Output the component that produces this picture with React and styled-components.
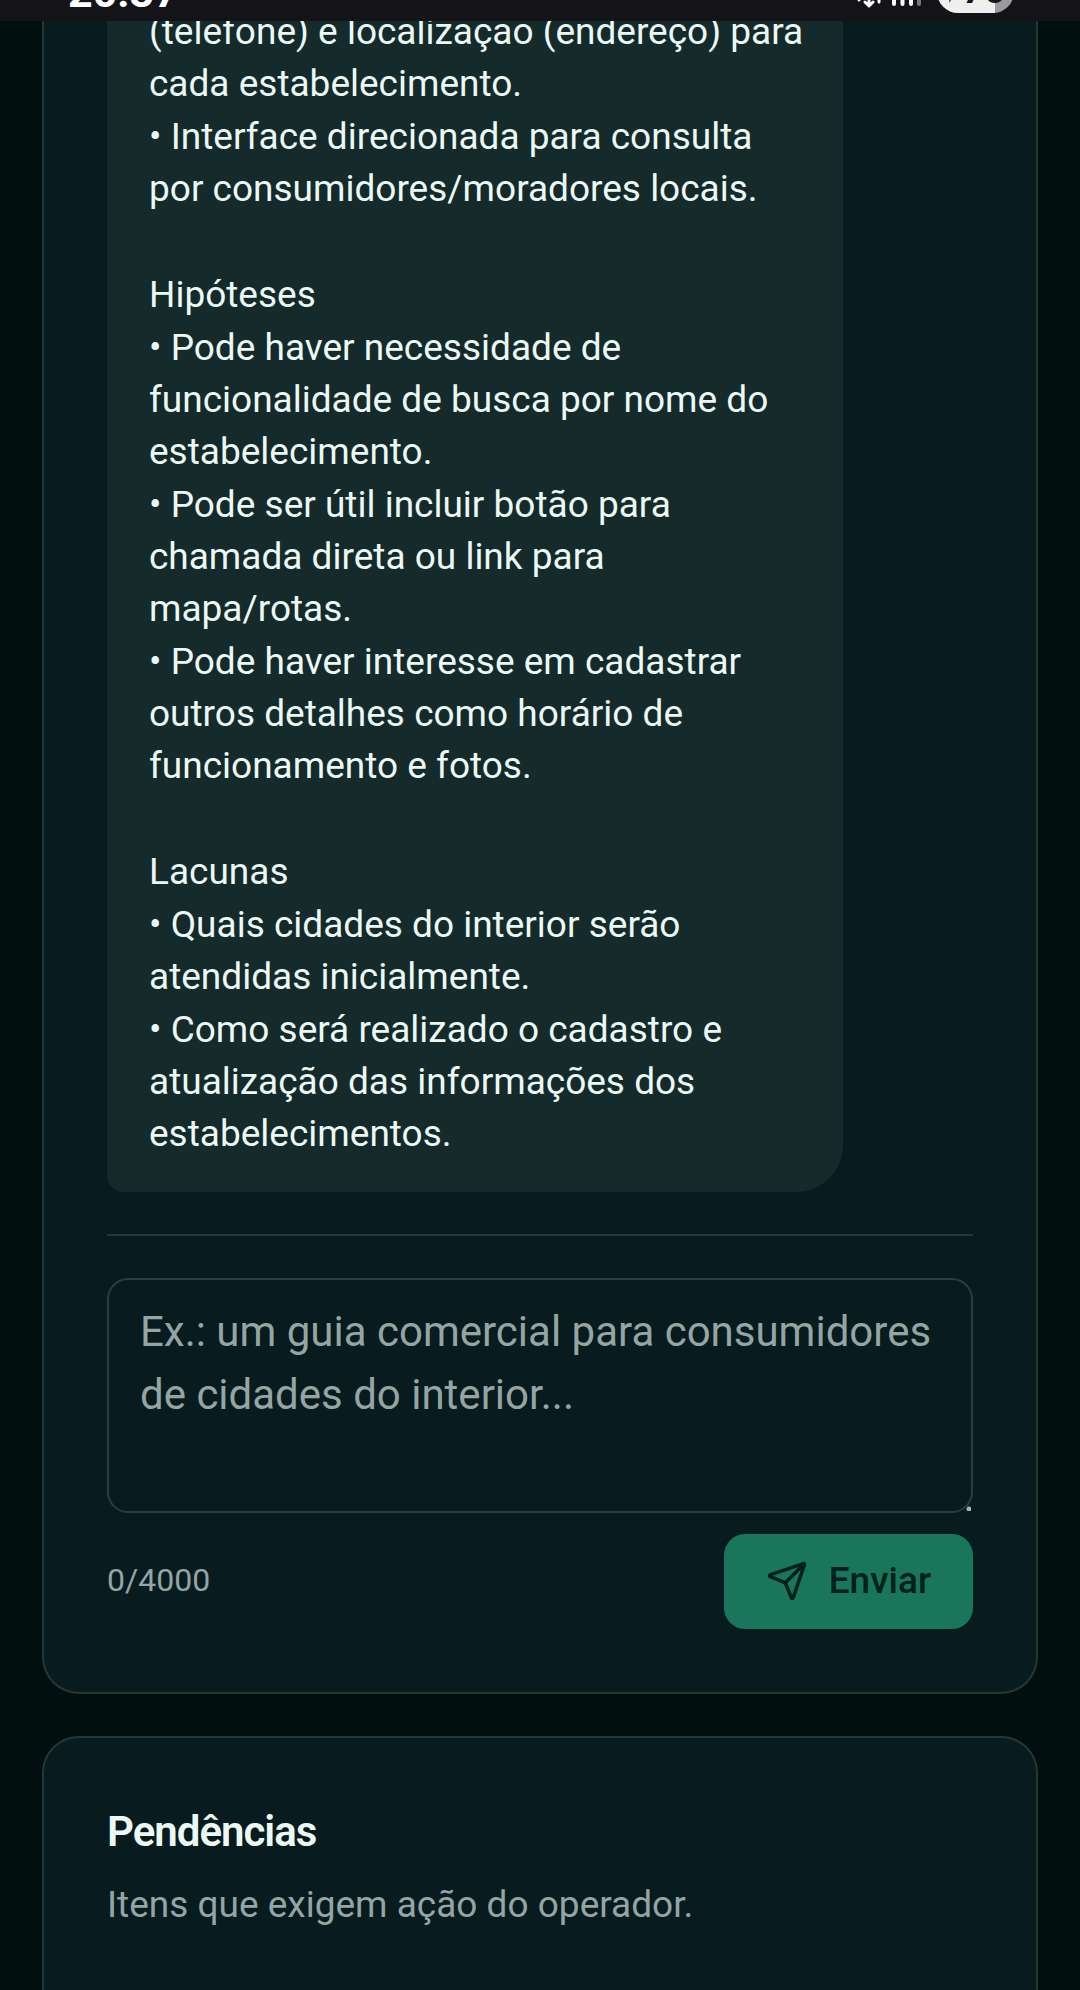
import React, { useState } from "react";
import styled, { createGlobalStyle } from "styled-components";
import { Send } from "lucide-react";

const GlobalStyle = createGlobalStyle`
  * {
    box-sizing: border-box;
  }

  body {
    margin: 0;
    background: #010f0f;
    color: #ecf8f3;
    font-family: Roboto, "Noto Sans", sans-serif;
    overflow: hidden;
  }
`;

const StatusBar = styled.header`
  position: fixed;
  top: 0;
  left: 0;
  right: 0;
  z-index: 10;
  height: 21px;
  padding: 0 66px 8px 68px;
  display: flex;
  align-items: flex-end;
  justify-content: space-between;
  overflow: hidden;
  background: #131318;
  color: #ffffff;
`;

const Time = styled.time`
  font-size: 43px;
  line-height: 42px;
  font-weight: 700;
`;

const StatusIcons = styled.div`
  display: flex;
  align-items: flex-end;
  gap: 14px;
`;

const Battery = styled.span`
  width: 77px;
  height: 42px;
  padding: 0 9px 4px;
  display: flex;
  align-items: center;
  justify-content: space-between;
  border-radius: 21px;
  background: linear-gradient(90deg, #efefef 75%, #9b9b9f 75%);
  color: #131318;
  font-size: 37px;
  line-height: 37px;
  font-weight: 700;
`;

const Page = styled.main`
  min-height: 100vh;
  padding: 0 42px;
  display: flex;
  flex-direction: column;
  gap: 42px;
`;

const Card = styled.section`
  padding: 63px;
  background: #081b1e;
  border: 2px solid #263735;
  border-radius: 37px;
`;

const ChatCard = styled(Card)`
  padding-top: 0;
  border-top: 0;
  border-radius: 0 0 37px 37px;
`;

const PendingCard = styled(Card)`
  padding: 62px 63px 126px;
`;

const Bubble = styled.article`
  width: 85%;
  padding: 6px 36px 32px 42px;
  display: flex;
  flex-direction: column;
  gap: 54px;
  background: #142a2b;
  border-radius: 0 0 47px 16px;
  font-size: 37px;
  line-height: 52px;
`;

const Block = styled.div`
  display: flex;
  flex-direction: column;
  gap: 1px;
`;

const Line = styled.p`
  margin: 0;
`;

const Composer = styled.form`
  margin-top: 42px;
  padding-top: 42px;
  display: flex;
  flex-direction: column;
  gap: 21px;
  border-top: 2px solid #263735;
`;

const Field = styled.textarea`
  display: block;
  width: 100%;
  height: 235px;
  padding: 20px 31px;
  background: transparent;
  border: 2px solid #2b3d3d;
  border-radius: 21px;
  color: #ecf8f3;
  font-family: inherit;
  font-size: 42px;
  line-height: 63px;
  resize: vertical;
  outline: none;

  &::placeholder {
    color: #94a5a4;
    opacity: 1;
  }

  &::-webkit-resizer {
    background: radial-gradient(circle at 13px 13px, #a9b5b3 2px, transparent 3px);
  }
`;

const ComposerFooter = styled.div`
  display: flex;
  align-items: center;
  justify-content: space-between;
`;

const Counter = styled.span`
  padding-bottom: 4px;
  color: #94a5a4;
  font-size: 32px;
  line-height: 42px;
`;

const SendButton = styled.button`
  height: 95px;
  padding: 0 42px 2px;
  display: flex;
  align-items: center;
  gap: 21px;
  border: 0;
  border-radius: 21px;
  background: #19765a;
  color: #03201b;
  font-family: inherit;
  font-size: 37px;
  font-weight: 500;
  cursor: pointer;
`;

const Title = styled.h2`
  margin: 0;
  font-size: 42px;
  line-height: 63px;
  font-weight: 600;
  letter-spacing: -1px;
`;

const Subtitle = styled.p`
  margin: 16px 0 0;
  color: #94a5a4;
  font-size: 37px;
  line-height: 52px;
`;

const MAX_LENGTH = 4000;

const blocks = [
  [
    "(telefone) e localização (endereço) para cada estabelecimento.",
    "• Interface direcionada para consulta por consumidores/moradores locais.",
  ],
  [
    "Hipóteses",
    "• Pode haver necessidade de funcionalidade de busca por nome do estabelecimento.",
    "• Pode ser útil incluir botão para chamada direta ou link para mapa/rotas.",
    "• Pode haver interesse em cadastrar outros detalhes como horário de funcionamento e fotos.",
  ],
  [
    "Lacunas",
    "• Quais cidades do interior serão atendidas inicialmente.",
    "• Como será realizado o cadastro e atualização das informações dos estabelecimentos.",
  ],
];

const SignalIcons = () => (
  <svg width="66" height="24" viewBox="0 0 66 24" fill="none" strokeLinecap="round">
    <path d="M2 4v7M22 4v9" stroke="#fff" strokeWidth="3" />
    <path d="M12 2v14M8 13l4 4 4-4" stroke="#fff" strokeWidth="3" strokeLinejoin="round" />
    <path d="M37 10v5M45.500 6v9M54 2v13" stroke="#fff" strokeWidth="4" />
    <path d="M62 0v15" stroke="#77777b" strokeWidth="4" />
  </svg>
);

const Bolt = () => (
  <svg width="14" height="26" viewBox="0 0 14 26">
    <path d="M9 0L0 15h5L3 26 14 10H8z" fill="#131318" />
  </svg>
);

const App = () => {
  const [message, setMessage] = useState("");

  return (
    <>
      <GlobalStyle />
      <StatusBar>
        <Time>20:37</Time>
        <StatusIcons>
          <SignalIcons />
          <Battery>
            <Bolt />
            76
          </Battery>
        </StatusIcons>
      </StatusBar>
      <Page>
        <ChatCard>
          <Bubble>
            {blocks.map((lines, index) => (
              <Block key={index}>
                {lines.map((line) => (
                  <Line key={line}>{line}</Line>
                ))}
              </Block>
            ))}
          </Bubble>
          <Composer onSubmit={(e) => e.preventDefault()}>
            <Field
              aria-label="Mensagem"
              maxLength={MAX_LENGTH}
              value={message}
              onChange={(e) => setMessage(e.target.value)}
              placeholder="Ex.: um guia comercial para consumidores de cidades do interior..."
            />
            <ComposerFooter>
              <Counter>
                {message.length}/{MAX_LENGTH}
              </Counter>
              <SendButton type="submit">
                <Send size={42} />
                Enviar
              </SendButton>
            </ComposerFooter>
          </Composer>
        </ChatCard>
        <PendingCard>
          <Title>Pendências</Title>
          <Subtitle>Itens que exigem ação do operador.</Subtitle>
        </PendingCard>
      </Page>
    </>
  );
};

export default App;
